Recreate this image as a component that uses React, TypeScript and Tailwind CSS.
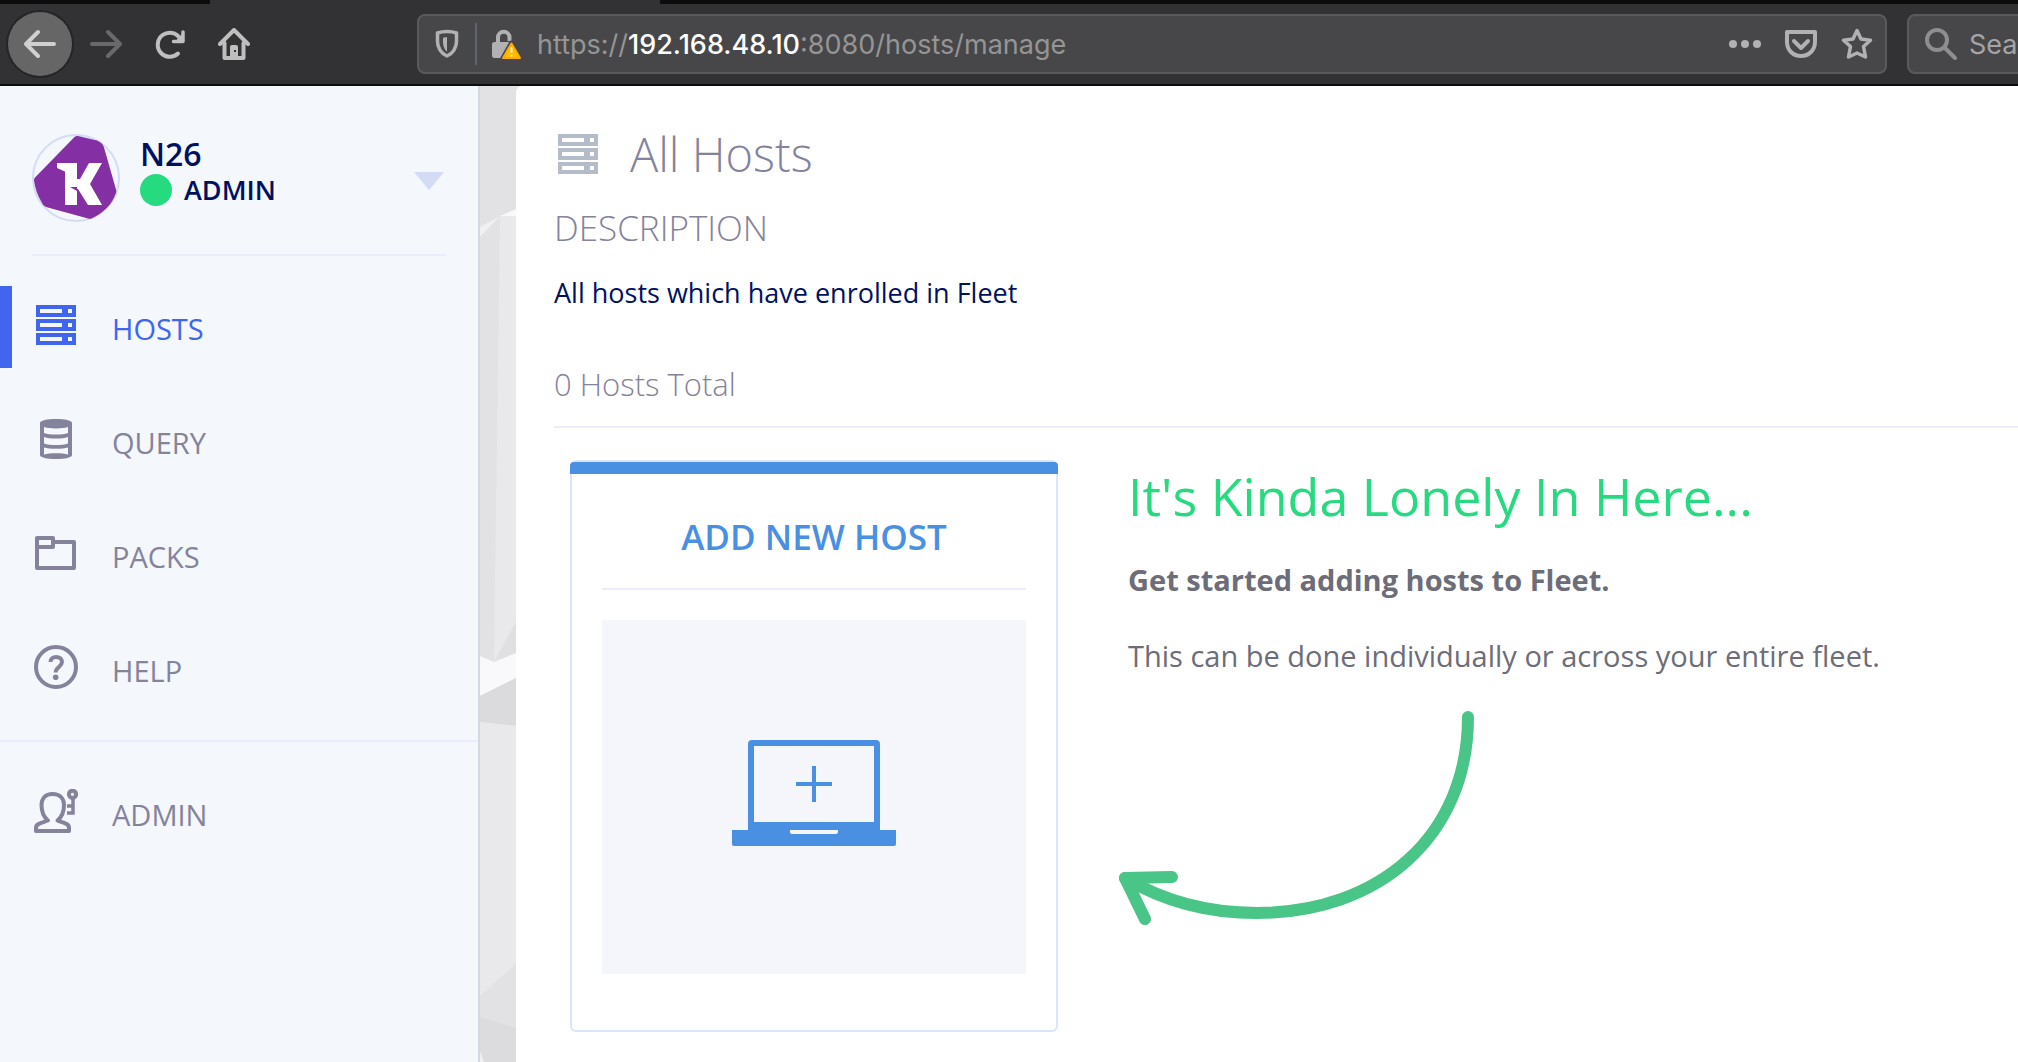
import type { ReactNode } from "react";

function ServerIcon({ className }: { className: string }) {
  return (
    <svg viewBox="0 0 40 40" className={className} fill="currentColor" fillRule="evenodd" aria-hidden="true">
      <path d="M0 0h40v12H0zM4 4v4h22V4zM32 4v4h4V4z" />
      <path d="M0 14h40v12H0zM4 18v4h22v-4zM32 18v4h4v-4z" />
      <path d="M0 28h40v12H0zM4 32v4h22v-4zM32 32v4h4v-4z" />
    </svg>
  );
}

function DatabaseIcon() {
  return (
    <svg viewBox="0 0 32 40" className="h-10 w-8" aria-hidden="true">
      <path
        fill="currentColor"
        fillRule="evenodd"
        d="M0 4C0 1.500 7 0 16 0s16 1.500 16 4v32c0 2.500-7 4-16 4S0 38.500 0 36zM4 8v6c3 1 7 1.500 12 1.500s9-.5 12-1.500V8c-3 1-7 1.400-12 1.400S7 9 4 8zM4 18v6.500c3 1 7 1.500 12 1.500s9-.5 12-1.500V18c-3 1-7 1.500-12 1.500S7 19 4 18zM4 28.500v7c3-1 7-1.300 12-1.300s9 .3 12 1.300v-7c-3 1-7 1.300-12 1.300s-9-.3-12-1.300z"
      />
    </svg>
  );
}

function FolderIcon() {
  return (
    <svg viewBox="0 0 42 34" className="h-[34px] w-[42px]" fill="none" stroke="currentColor" strokeWidth="4" strokeLinejoin="round" aria-hidden="true">
      <path d="M2 2h16v9H2z" />
      <path d="M2 10v22h37V6H18" />
    </svg>
  );
}

function HelpIcon() {
  return (
    <svg viewBox="0 0 44 44" className="size-11" fill="none" stroke="currentColor" strokeWidth="4" aria-hidden="true">
      <circle cx="22" cy="22" r="20" />
      <path d="M16.500 17C16.500 13.500 19 12 22 12c3.500 0 6 2 6 5 0 4.500-6.300 5-6.300 10.500" />
      <circle cx="21.700" cy="32.300" r="2.800" fill="currentColor" stroke="none" />
    </svg>
  );
}

function AdminIcon() {
  return (
    <svg viewBox="0 0 44 44" className="size-11" fill="none" stroke="currentColor" strokeWidth="4" strokeLinejoin="round" aria-hidden="true">
      <path d="M18.500 5C11.500 5 7.500 9.500 7.500 16c0 7 1.500 11.500 6.500 15.500C9 33.500 2 34.500 2 38.500V42h33v-3.500c0-4-7-5-11.500-7C28.500 27.500 30 23 30 16c0-6.500-4-11-11.500-11z" />
      <circle cx="38.500" cy="5.300" r="3.600" />
      <path d="M39 9v15h-6M39 17h-6" strokeWidth="3.500" strokeLinejoin="miter" />
    </svg>
  );
}

function Avatar() {
  return (
    <svg viewBox="0 0 88 88" className="size-22 shrink-0" role="img" aria-label="Kolide">
      <circle cx="44" cy="44" r="43" fill="none" stroke="#d3dbf5" strokeWidth="2" />
      <path
        fill="#8430a4"
        d="M42.500 3q1.500-1.400 3.500-1L65 6.500q6 2.500 7 7L84 55.500q.6 2 0 3.500C80 71 70 80 59.500 84.500q-1.500.6-3.500 0L14 73Q10.500 71.500 9.500 68 3.500 58 2 46.500q-.2-1.500 1-3z"
      />
      <g fill="#fff">
        <rect x="33" y="29" width="12" height="42" />
        <polygon points="25,29 34,29 34,38 25,34" />
        <polygon points="45,45 48,45 57,29 70,29 58,50 70,71 56,71 46,55 38,53 45,52" />
      </g>
      <polygon points="38,53 45,53 45,57" fill="#8430a4" />
    </svg>
  );
}

function ToolButton({ label, children }: { label: string; children: ReactNode }) {
  return (
    <button type="button" aria-label={label} className="flex size-8 shrink-0 items-center justify-center">
      <svg viewBox="0 0 32 32" className="size-8" fill="none" strokeWidth="4" strokeLinecap="round" strokeLinejoin="round" stroke="currentColor">
        {children}
      </svg>
    </button>
  );
}

function BrowserBar() {
  return (
    <header className="overflow-hidden border-b-2 border-[#0c0c0d] bg-[#323234] font-[Inter,sans-serif] text-[#b1b1b3]">
      <div className="flex h-1 justify-between bg-[#323234]">
        <div className="w-[210px] bg-[#0c0c0d]" />
        <div className="ml-[450px] flex-1 bg-[#0c0c0d]" />
      </div>
      <div className="flex h-20 items-center pl-2">
        <button type="button" aria-label="Back" className="flex size-16 shrink-0 items-center justify-center rounded-full bg-[#666667] text-[#d0d0d1] ring-2 ring-[#252527]">
          <svg viewBox="0 0 32 32" className="size-8" fill="none" stroke="currentColor" strokeWidth="4" strokeLinecap="round" strokeLinejoin="round">
            <path d="M30 16H2M14 4L2 16l12 12" />
          </svg>
        </button>
        <nav aria-label="Browser" className="ml-[18px] flex gap-8 text-[#bfbfc0]">
          <span className="flex text-[#69696b]">
            <ToolButton label="Forward">
              <path d="M2 16h28M18 4l12 12-12 12" />
            </ToolButton>
          </span>
          <ToolButton label="Reload">
            <path d="M24 25.500a12 12 0 1 1 2-15" />
            <path d="M29 4v9.500H19.500" strokeWidth="3.500" />
            <path d="M29 6v7.500h-7z" fill="currentColor" strokeWidth="1" />
          </ToolButton>
          <ToolButton label="Home">
            <path d="M2 16L16 2l14 14M6.500 15v15h19V15" />
            <path fill="currentColor" stroke="none" fillRule="evenodd" d="M12 30V19q0-2 2-2h4q2 0 2 2v11zM16 22v2h2v-2z" />
          </ToolButton>
        </nav>
        <div className="ml-[167px] flex h-15 min-w-0 flex-1 items-center rounded-lg border-2 border-[#5a5a5c] bg-[#474749] px-3">
          <button type="button" aria-label="Tracking protection" className="flex size-8 shrink-0 items-center justify-center">
            <svg viewBox="0 0 32 32" className="size-8" fill="none" stroke="currentColor" strokeWidth="3.500" strokeLinejoin="round">
              <path d="M16 3.500c3.500 0 7 .6 9.500 1.500v8.500c0 6-3.500 12-9.500 14.500-6-2.500-9.500-8.500-9.500-14.500V5C9 4.100 12.500 3.500 16 3.500z" />
              <path d="M16 9v14.500c-3-2-4-6.500-4-10V9.700z" fill="currentColor" stroke="none" />
            </svg>
          </button>
          <div className="ml-3 h-[42px] w-0.5 shrink-0 bg-[#5f6370]" />
          <button type="button" aria-label="Connection is not secure" className="ml-[14px] flex size-8 shrink-0 items-center justify-center">
            <svg viewBox="0 0 32 32" className="size-8">
              <path d="M7 15V9.500a5.500 5.500 0 0 1 11.500 0V13" fill="none" stroke="currentColor" strokeWidth="4" />
              <rect x="1" y="14" width="20" height="16" rx="2.500" fill="currentColor" />
              <path d="M20.500 15L11.500 31h18z" fill="#ffbf00" stroke="#474749" strokeWidth="5" strokeLinejoin="round" />
              <path d="M20.500 15.500L12 30h17z" fill="#ffbf00" stroke="#ffaa00" strokeWidth="2" strokeLinejoin="round" />
              <path d="M20.500 19v5.500M20.500 27v1.500" stroke="#fff" strokeWidth="1.800" />
            </svg>
          </button>
          <div
            role="textbox"
            aria-label="Address"
            contentEditable
            suppressContentEditableWarning
            className="ml-[14px] min-w-0 flex-1 overflow-hidden pt-0.5 text-[27px] leading-9 whitespace-nowrap text-[#959596] outline-none"
          >
            https://<span className="font-medium text-white">192.168.48.10</span>:8080/hosts/manage
          </div>
          <div className="flex gap-6">
            <ToolButton label="Page actions">
              <g fill="currentColor" stroke="none">
                <circle cx="4" cy="16" r="4" />
                <circle cx="16" cy="16" r="4" />
                <circle cx="28" cy="16" r="4" />
              </g>
            </ToolButton>
            <ToolButton label="Save to Pocket">
              <path d="M2 4h28v10c0 8-6 14-14 14S2 22 2 14z" />
              <path d="M9 13l7 7 7-7" />
            </ToolButton>
            <ToolButton label="Bookmark this page">
              <path d="M16 2.500l4 8.500 9.500 1.200-7 6.300 2 10.500L16 25l-8.500 4 2-10.500-7-6.300L12 11z" strokeWidth="3.500" />
            </ToolButton>
          </div>
        </div>
        <label className="-mr-10 ml-5 flex h-15 w-[151px] shrink-0 items-center rounded-lg border-2 border-[#5a5a5c] bg-[#474749] pl-4">
          <svg viewBox="0 0 32 32" className="size-8 shrink-0 text-[#8e8e90]" fill="none" stroke="currentColor" strokeWidth="4" strokeLinecap="round" aria-hidden="true">
            <circle cx="12" cy="12" r="10" />
            <path d="M20 20l10 10" />
          </svg>
          <input
            type="text"
            aria-label="Search"
            placeholder="Search"
            className="ml-3 w-[100px] bg-transparent pt-0.5 text-[27px] leading-9 outline-none placeholder:text-[#a5a5a7]"
          />
        </label>
      </div>
    </header>
  );
}

function NavItem({ label, icon, active = false }: { label: string; icon: ReactNode; active?: boolean }) {
  return (
    <li>
      <a
        href="#"
        aria-current={active ? "page" : undefined}
        className={
          active
            ? "flex h-[82px] items-center border-l-12 border-[#4066ee] pl-5 text-[#4066ee]"
            : "flex h-[82px] items-center pl-8 text-[#85839b]"
        }
      >
        <span className="flex w-12 shrink-0 justify-center pb-1">{icon}</span>
        <span className="pt-1 pl-8 text-[29px] leading-8">{label}</span>
      </a>
    </li>
  );
}

function Sidebar() {
  return (
    <aside className="w-[480px] shrink-0 border-r-2 border-[#d3d9e3] bg-[#f4f7fc]">
      <div className="mx-8 flex h-[170px] items-center border-b-2 border-[#ebebfb] pt-4">
        <Avatar />
        <div className="ml-5 flex-1 pb-3 font-semibold text-[#00125f]">
          <p className="text-[32px] leading-9">N26</p>
          <p className="flex items-center gap-3 text-[27px] leading-9">
            <span className="size-8 rounded-full bg-[#26db7f]" />
            ADMIN
          </p>
        </div>
        <button type="button" aria-label="User menu" className="mt-1.5 mr-0.5">
          <svg viewBox="0 0 30 18" className="h-[18px] w-[30px]" fill="#d3dbf5">
            <path d="M0 0h30L15 18z" />
          </svg>
        </button>
      </div>
      <nav aria-label="Main">
        <ul className="flex flex-col gap-8 border-b-2 border-[#ebebfb] py-[30px]">
          <NavItem label="HOSTS" icon={<ServerIcon className="size-10" />} active />
          <NavItem label="QUERY" icon={<DatabaseIcon />} />
          <NavItem label="PACKS" icon={<FolderIcon />} />
          <NavItem label="HELP" icon={<HelpIcon />} />
        </ul>
        <ul className="pt-[30px]">
          <NavItem label="ADMIN" icon={<AdminIcon />} />
        </ul>
      </nav>
    </aside>
  );
}

function FacetedStrip() {
  return (
    <svg viewBox="0 0 36 976" preserveAspectRatio="xMidYMin slice" className="w-9 shrink-0 self-start" aria-hidden="true">
      <rect width="36" height="976" fill="#e2e2e4" />
      <polygon points="0,141 20,130 0,151" fill="#f0f0f2" />
      <polygon points="20,130 36,123 36,130" fill="#f9f9fb" />
      <polygon points="20,130 36,130 36,536 14,576" fill="#e9e9eb" />
      <polygon points="36,536 36,567 14,576" fill="#e0e0e2" />
      <polygon points="0,570 14,576 36,567 36,592 0,610" fill="#f9f9fb" />
      <polygon points="0,610 36,592 36,640 0,636" fill="#dbdbdd" />
      <polygon points="0,636 36,640 36,878 0,910" fill="#e9e9eb" />
      <polygon points="0,931 36,942 36,976 0,976" fill="#dcdcde" />
      <polygon points="0,965 4,976 0,976" fill="#f0f0f2" />
    </svg>
  );
}

function AddHostCard() {
  return (
    <section className="flex h-[572px] w-[488px] shrink-0 flex-col rounded-md border-2 border-[#d9e6f8]">
      <div className="-mx-0.5 h-3 rounded-t-sm bg-[#4a90e2]" />
      <div className="mx-[30px] flex h-29 items-center justify-center border-b-2 border-[#ebebfb] pt-3">
        <h2 className="text-[35px] leading-10 font-semibold text-[#4a90e2]">ADD NEW HOST</h2>
      </div>
      <button type="button" aria-label="Add new host" className="mx-[30px] mt-[30px] flex h-[354px] items-center justify-center bg-[#f4f6fb] pb-2">
        <svg viewBox="0 0 164 106" className="h-[106px] w-[164px]" fill="#4a90e2" fillRule="evenodd">
          <path d="M20 0h124q4 0 4 4v86h16v14q0 2-2 2H2q-2 0-2-2V90h16V4q0-4 4-4zM22 6v76h120V6zM58 90v2q0 2 2 2h44q2 0 2-2v-2z" />
          <path d="M80 26h4v16h16v4H84v16h-4V46H64v-4h16z" />
        </svg>
      </button>
    </section>
  );
}

function LonelyMessage() {
  return (
    <section className="min-w-0 pt-1 text-[#6c6d78]">
      <h2 className="text-[52px] leading-16 text-[#26db7f]">It's Kinda Lonely In Here...</h2>
      <p className="mt-8 text-[29px] leading-10 font-bold">Get started adding hosts to Fleet.</p>
      <p className="mt-9 text-[29px] leading-10">This can be done individually or across your entire fleet.</p>
      <svg
        viewBox="1118 708 360 216"
        className="mt-[34px] -ml-2.5 h-[216px] w-[360px]"
        fill="none"
        stroke="#49c587"
        strokeWidth="12"
        strokeLinecap="round"
        strokeLinejoin="round"
        aria-hidden="true"
      >
        <path d="M1468 715C1468 835 1378 911 1257 911 1210 911 1165 900 1125 876" />
        <path d="M1172 875L1125 876 1145 917" />
      </svg>
    </section>
  );
}

export default function App() {
  return (
    <div className="flex min-h-screen flex-col overflow-hidden font-['Open_Sans',sans-serif]">
      <BrowserBar />
      <div className="flex flex-1 bg-[#e2e2e4]">
        <Sidebar />
        <FacetedStrip />
        <main className="min-w-0 flex-1 rounded-tl-md bg-white pt-9 pl-[38px]">
          <div className="flex h-16 items-center gap-8 pl-1">
            <ServerIcon className="size-10 shrink-0 text-[#b3bcc8]" />
            <h1 className="text-[47px] leading-16 font-light text-[#85839b]">All Hosts</h1>
          </div>
          <p className="mt-[22px] text-[35px] leading-10 font-light text-[#85839b]">DESCRIPTION</p>
          <p className="mt-[29px] text-[27px] leading-8 text-[#00125f]">All hosts which have enrolled in Fleet</p>
          <p className="mt-[59px] border-b-2 border-[#ebebfb] pb-[26px] text-[31px] leading-8 font-light text-[#85839b]">0 Hosts Total</p>
          <div className="mt-8 ml-4 flex gap-[70px]">
            <AddHostCard />
            <LonelyMessage />
          </div>
        </main>
      </div>
    </div>
  );
}
